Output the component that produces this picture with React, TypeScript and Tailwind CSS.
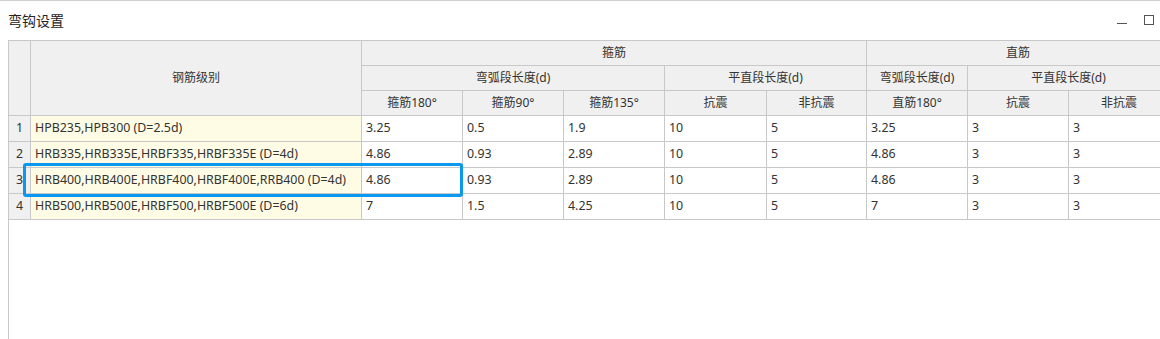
const grades = [
  { name: "HPB235,HPB300 (D=2.5d)", v: ["3.25", "0.5", "1.9", "10", "5", "3.25", "3", "3"] },
  { name: "HRB335,HRB335E,HRBF335,HRBF335E (D=4d)", v: ["4.86", "0.93", "2.89", "10", "5", "4.86", "3", "3"] },
  { name: "HRB400,HRB400E,HRBF400,HRBF400E,RRB400 (D=4d)", v: ["4.86", "0.93", "2.89", "10", "5", "4.86", "3", "3"] },
  { name: "HRB500,HRB500E,HRBF500,HRBF500E (D=6d)", v: ["7", "1.5", "4.25", "10", "5", "7", "3", "3"] },
];

const th = "border border-[#c8c8c8] bg-[#f0f0f0] font-normal text-center align-middle p-0 h-[25px]";
const td = "border border-[#c8c8c8] px-[4px] py-0 h-[26px] align-middle whitespace-nowrap text-[12.4px]";

export default function App() {
  return (
    <div
      className="w-[1160px] h-[339px] overflow-hidden bg-white border-t border-[#cfcfcf] text-[12px] text-[#333]"
      style={{ fontFamily: '"Noto Sans", "Noto Sans CJK SC", sans-serif' }}
    >
      <div className="flex items-center justify-between h-[39px] pl-[8px] pr-[6px]">
        <span className="text-[14px] text-[#222]">弯钩设置</span>
        <div className="flex items-center gap-[17px]">
          <span className="block w-[10px] h-px bg-[#555] mt-[5px]" />
          <span className="block w-[10px] h-[10px] border border-[#555] -mt-[1px]" />
        </div>
      </div>

      <div className="relative ml-[8px] h-[300px] border-l border-[#c8c8c8]">
        <table className="table-fixed border-collapse w-[1161px] -ml-px leading-none">
          <colgroup>
            <col className="w-[22px]" />
            <col className="w-[331px]" />
            <col className="w-[101px]" />
            <col className="w-[101px]" />
            <col className="w-[101px]" />
            <col className="w-[102px]" />
            <col className="w-[100px]" />
            <col className="w-[101px]" />
            <col className="w-[101px]" />
            <col className="w-[101px]" />
          </colgroup>
          <thead>
            <tr>
              <th rowSpan={3} className={th} />
              <th rowSpan={3} className={th}>钢筋级别</th>
              <th colSpan={5} className={th}>箍筋</th>
              <th colSpan={3} className={th}>直筋</th>
            </tr>
            <tr>
              <th colSpan={3} className={th}>弯弧段长度(d)</th>
              <th colSpan={2} className={th}>平直段长度(d)</th>
              <th className={th}>弯弧段长度(d)</th>
              <th colSpan={2} className={th}>平直段长度(d)</th>
            </tr>
            <tr>
              <th className={th}>箍筋180°</th>
              <th className={th}>箍筋90°</th>
              <th className={th}>箍筋135°</th>
              <th className={th}>抗震</th>
              <th className={th}>非抗震</th>
              <th className={th}>直筋180°</th>
              <th className={th}>抗震</th>
              <th className={th}>非抗震</th>
            </tr>
          </thead>
          <tbody>
            {grades.map((g, i) => (
              <tr key={g.name}>
                <td className={`${td} bg-[#f0f0f0] text-center px-0`}>{i + 1}</td>
                <td className={`${td} bg-[#fffce6]`}>{g.name}</td>
                {g.v.map((x, j) => (
                  <td key={j} className={td}>{x}</td>
                ))}
              </tr>
            ))}
          </tbody>
        </table>

        {/* selected row outline */}
        <div className="absolute left-[14px] top-[123px] w-[440px] h-[34px] border-[3px] border-[#0a98f0] rounded-[3px]" />
      </div>
    </div>
  );
}
